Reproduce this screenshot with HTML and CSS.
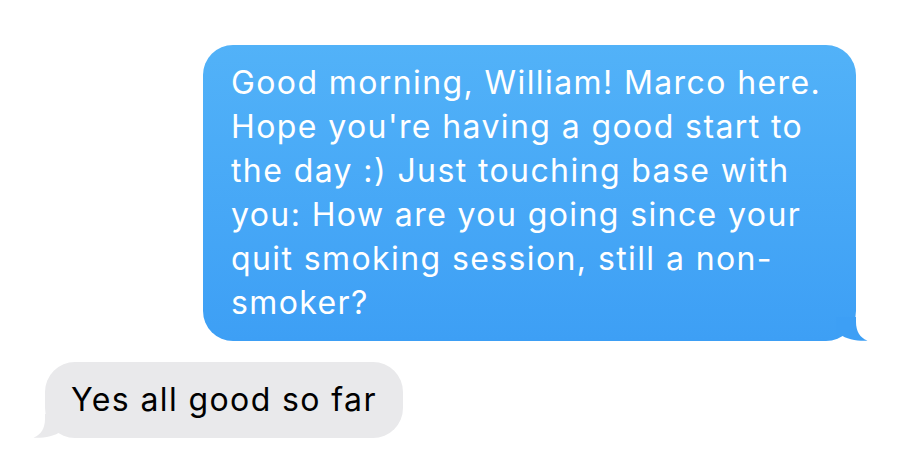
FILE: index.html
```html
<!DOCTYPE html>
<html lang="en">
<head>
  <meta charset="UTF-8">
  <link rel="stylesheet" href="styles.css">
</head>
<body>
  <div class="chat">
    <div class="bubble sent">
      <p class="msg">Good morning, William! Marco here.<br>Hope you're having a good start to<br>the day :) Just touching base with<br>you: How are you going since your<br>quit smoking session, still a non-<br>smoker?</p>
      <svg class="tail" width="32" height="24" viewBox="0 0 32 24"><path d="M0 0 L20 0 L20 5 C20 14 24 21 31.5 23.6 C25 24.4 10 23 4 17 L0 20 Z"/></svg>
    </div>

    <div class="bubble received">
      <p class="msg">Yes all good so far</p>
      <svg class="tail" width="32" height="24" viewBox="0 0 32 24"><path d="M0 0 L20 0 L20 5 C20 14 24 21 31.5 23.6 C25 24.4 10 23 4 17 L0 20 Z"/></svg>
    </div>
  </div>
</body>
</html>
```

FILE: styles.css
```css
body{
	margin:0;
	background:#fff;
	font-family:"Inter","Noto Sans",sans-serif;
}
.chat{
	display:flex;
	flex-direction:column;
	padding-top:45px;
}
.bubble{
	position:relative;
	border-radius:30px;
	padding:16px 28px;
	box-sizing:border-box;
}
.msg{
	margin:0;
	font-size:32px;
	line-height:44px;
	letter-spacing:1.4px;
	white-space:nowrap;
}
.sent{
	align-self:flex-end;
	width:653px;
	margin-right:44px;
	background:linear-gradient(#52b2f8,#3d9ff5);
	color:#fff;
}
.sent .tail{
	position:absolute;
	right:-12px;
	bottom:0;
	fill:#3d9ff5;
}
.received{
	align-self:flex-start;
	margin-left:45px;
	margin-top:21px;
	padding:16px 26px 16px 26px;
	background:#e9e9eb;
	color:#000;
}
.received .tail{
	position:absolute;
	left:-12px;
	bottom:0;
	fill:#e9e9eb;
	transform:scaleX(-1);
}
```
